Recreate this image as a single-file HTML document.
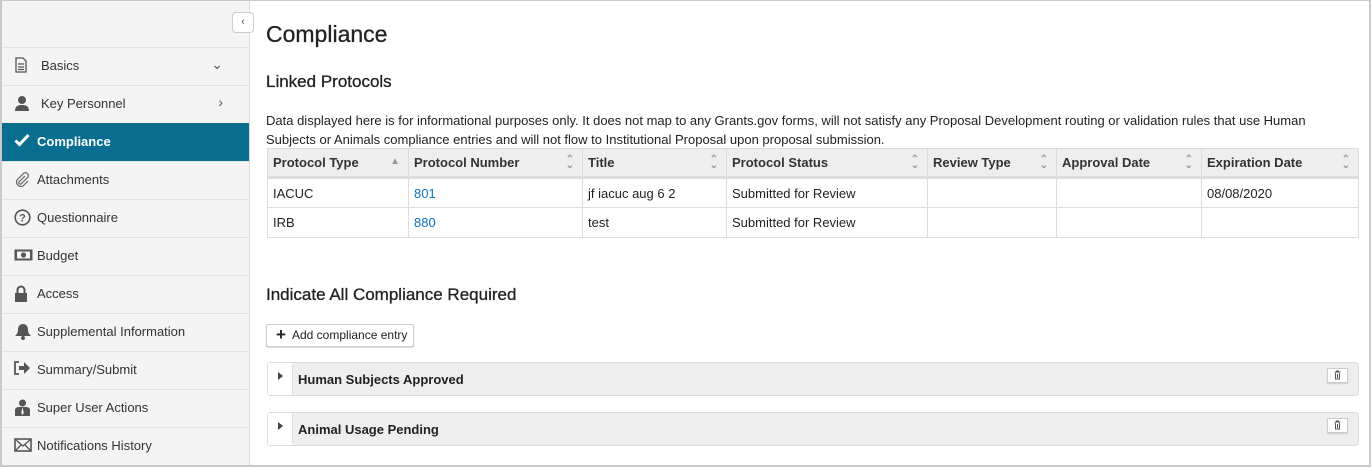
<!DOCTYPE html>
<html><head><meta charset="utf-8"><style>
*{box-sizing:border-box;margin:0;padding:0}
body{width:1371px;height:467px;overflow:hidden;background:#fff;font-family:"Liberation Sans",sans-serif;color:#222;position:relative}
.frame{position:absolute;left:0;top:0;width:1371px;height:467px;border:2px solid #c9c9c9;border-top-width:1px}
.side{position:absolute;left:2px;top:1px;width:248px;height:465px;background:#f4f4f4;border-right:1px solid #ddd}
.item{position:absolute;left:0;width:247px;height:38px;border-top:1px solid #e2e2e2;font-size:13px;color:#333}
.item svg{position:absolute;left:12px;top:9px}
.item span{position:absolute;left:35px;top:10px}
.item.act{background:#0a6e91;color:#fff;font-weight:bold;border-top-color:#0a6e91}
.chev{position:absolute;right:26px;top:8px;font-size:14px;color:#555}
.tog{position:absolute;left:230px;top:11px;width:22px;height:21px;background:#fff;border:1px solid #ccc;border-radius:4px;font-size:11px;color:#555;text-align:center;line-height:18px}
h1{position:absolute;left:266px;top:21px;font-size:23px;font-weight:normal;color:#222;white-space:nowrap;-webkit-text-stroke:0.3px #222}
h2{position:absolute;left:266px;font-size:17px;font-weight:normal;color:#222;white-space:nowrap;-webkit-text-stroke:0.3px #222}
p{position:absolute;left:266px;top:111px;width:1060px;font-size:13px;line-height:19px;color:#222}
table{position:absolute;left:267px;top:148px;width:1092px;border-collapse:collapse;font-size:13px}
th{background:#eeeeee;text-align:left;font-weight:bold;height:29px;padding:0 5px;border:1px solid #dcdcdc;border-bottom:3px solid #ddd;position:relative;color:#333}
td{height:30px;padding:0 5px;border:1px solid #ddd}
th i{position:absolute;right:8px;top:8px;font-style:normal;font-size:10px;color:#999;line-height:6px}
a{color:#0b73c2;text-decoration:none}
.btn{position:absolute;left:266px;top:324px;width:148px;height:23px;border:1px solid #ccc;border-radius:2px;box-shadow:0 1px 1px #ddd;font-size:12px;padding-left:25px;line-height:21px;color:#222;background:#fff;white-space:nowrap}
.btn b{position:absolute;left:9px;top:-1px;font-size:17px}
.pan{position:absolute;left:267px;width:1092px;height:34px;background:#eeeeee;border:1px solid #ddd;border-radius:3px}
.pan .l{position:absolute;left:0;top:0;width:25px;height:32px;background:#fff;border-right:1px solid #e2e2e2}
.pan .l:after{content:"";position:absolute;left:10px;top:9px;border-left:5px solid #444;border-top:4px solid transparent;border-bottom:4px solid transparent}
.pan .t{position:absolute;left:30px;top:9px;font-size:13px;font-weight:bold;color:#222}
.pan .d{position:absolute;right:10px;top:5px;width:21px;height:15px;background:#fff;border:1px solid #ccc;box-shadow:0 1px 1px #ccc}
</style></head><body>
<div class="side">
<div class="tog">&lsaquo;</div>
<div class="item" style="top:46px"><svg width="14" height="16" viewBox="0 0 14 16"><path d="M2 1h7l3 3v11H2z M4 7h6M4 10h6M4 12.5h6" fill="none" stroke="#555" stroke-width="1.3"/></svg><span style="left:39px">Basics</span><div class="chev">&#8964;</div></div>
<div class="item" style="top:84px"><svg width="16" height="16" viewBox="0 0 16 16"><circle cx="8" cy="5" r="4" fill="#555"/><path d="M1 16c0-5 3-6 7-6s7 1 7 6z" fill="#555"/></svg><span style="left:39px">Key Personnel</span><div class="chev">&rsaquo;</div></div>
<div class="item act" style="top:122px"><svg width="16" height="14" viewBox="0 0 16 14"><path d="M1.5 7.5l4 4 9-9.5" fill="none" stroke="#fff" stroke-width="3"/></svg><span>Compliance</span></div>
<div class="item" style="top:160px"><svg width="16" height="16" viewBox="0 0 16 16"><path d="M11 5l-6 6a1.5 1.5 0 002 2l7-7a3 3 0 00-4-4l-7 7a4.5 4.5 0 006 6l5-5" fill="none" stroke="#666" stroke-width="1.2"/></svg><span>Attachments</span></div>
<div class="item" style="top:198px"><svg width="17" height="17" viewBox="0 0 17 17"><circle cx="8.5" cy="8.5" r="7.3" fill="none" stroke="#555" stroke-width="1.6"/><text x="8.5" y="12.5" font-size="11" font-weight="bold" text-anchor="middle" fill="#555" font-family="Liberation Sans">?</text></svg><span>Questionnaire</span></div>
<div class="item" style="top:236px"><svg width="19" height="12" viewBox="0 0 19 12" style="top:11px"><rect x="0.5" y="0.5" width="18" height="11" fill="#555"/><rect x="3" y="2.5" width="13" height="7" fill="#f4f4f4"/><circle cx="9.5" cy="6" r="2.6" fill="#555"/></svg><span>Budget</span></div>
<div class="item" style="top:274px"><svg width="14" height="17" viewBox="0 0 14 17"><path d="M3.5 8V5a3.5 3.5 0 017 0v3" fill="none" stroke="#555" stroke-width="2"/><rect x="1" y="8" width="12" height="9" fill="#555"/></svg><span>Access</span></div>
<div class="item" style="top:312px"><svg width="18" height="17" viewBox="0 0 18 17"><path d="M9 1c3 0 5 2 5 6 0 3 2 5 3 6H1c1-1 3-3 3-6 0-4 2-6 5-6z" fill="#555"/><circle cx="9" cy="15" r="2" fill="#555"/></svg><span>Supplemental Information</span></div>
<div class="item" style="top:350px"><svg width="17" height="14" viewBox="0 0 17 14"><path d="M5 1H1v12h4" fill="none" stroke="#555" stroke-width="1.8"/><path d="M5 5h5V1l6 6-6 6V9H5z" fill="#555"/></svg><span>Summary/Submit</span></div>
<div class="item" style="top:388px"><svg width="17" height="17" viewBox="0 0 17 17"><circle cx="8.5" cy="4" r="3.5" fill="#555"/><path d="M1 17v-6c0-2 2-3 4-3h7c2 0 4 1 4 3v6z" fill="#555"/><path d="M8.5 8l-1.3 6 1.3 2 1.3-2z" fill="#f4f4f4"/></svg><span>Super User Actions</span></div>
<div class="item" style="top:426px"><svg width="18" height="14" viewBox="0 0 18 14" style="top:10px"><rect x="1" y="1" width="16" height="12" fill="none" stroke="#555" stroke-width="1.6"/><path d="M1 1l8 7 8-7M1 13l6-6M17 13l-6-6" fill="none" stroke="#555" stroke-width="1.3"/></svg><span>Notifications History</span></div>
</div>
<h1>Compliance</h1>
<h2 style="top:72px">Linked Protocols</h2>
<p>Data displayed here is for informational purposes only. It does not map to any Grants.gov forms, will not satisfy any Proposal Development routing or validation rules that use Human Subjects or Animals compliance entries and will not flow to Institutional Proposal upon proposal submission.</p>
<table>
<tr><th style="width:141px">Protocol Type<i style="top:10px">&#9650;</i></th><th style="width:174px">Protocol Number<i>&#8963;<br>&#8964;</i></th><th style="width:144px">Title<i>&#8963;<br>&#8964;</i></th><th style="width:201px">Protocol Status<i>&#8963;<br>&#8964;</i></th><th style="width:129px">Review Type<i>&#8963;<br>&#8964;</i></th><th style="width:145px">Approval Date<i>&#8963;<br>&#8964;</i></th><th>Expiration Date<i>&#8963;<br>&#8964;</i></th></tr>
<tr><td>IACUC</td><td><a>801</a></td><td>jf iacuc aug 6 2</td><td>Submitted for Review</td><td></td><td></td><td>08/08/2020</td></tr>
<tr><td>IRB</td><td><a>880</a></td><td>test</td><td>Submitted for Review</td><td></td><td></td><td></td></tr>
</table>
<h2 style="top:285px">Indicate All Compliance Required</h2>
<div class="btn"><b>+</b>Add compliance entry</div>
<div class="pan" style="top:362px"><div class="l"></div><div class="t">Human Subjects Approved</div><div class="d"><svg width="19" height="13" viewBox="0 0 19 13"><path d="M6.5 3h6M8.5 3V2h2v1M7.5 4v6h4V4M9.5 5v4" fill="none" stroke="#555" stroke-width="1"/></svg></div></div>
<div class="pan" style="top:412px"><div class="l"></div><div class="t">Animal Usage Pending</div><div class="d"><svg width="19" height="13" viewBox="0 0 19 13"><path d="M6.5 3h6M8.5 3V2h2v1M7.5 4v6h4V4M9.5 5v4" fill="none" stroke="#555" stroke-width="1"/></svg></div></div>
<div class="frame"></div>
</body></html>
